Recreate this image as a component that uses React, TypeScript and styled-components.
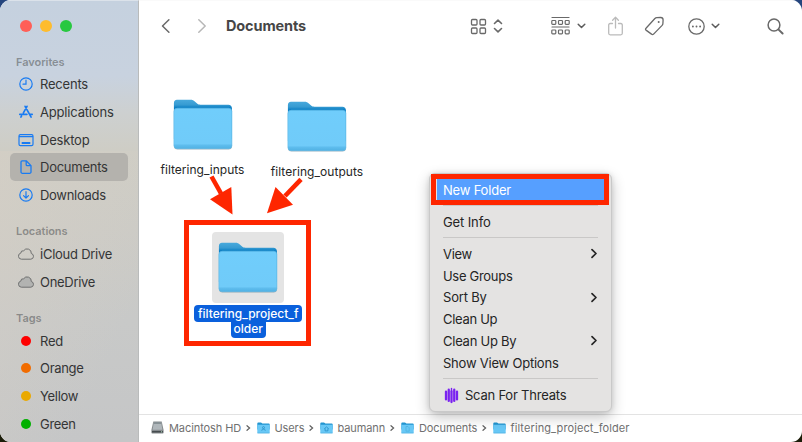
import React from "react";
import styled, { createGlobalStyle } from "styled-components";

const GlobalStyle = createGlobalStyle`
  * { box-sizing: border-box; }
  body {
    margin: 0;
    font-family: Inter, "Liberation Sans", sans-serif;
    -webkit-font-smoothing: antialiased;
  }
`;

const Desktop = styled.div`
  width: 802px;
  height: 442px;
  overflow: hidden;
  background: linear-gradient(180deg, #24457d 0%, #24457d 50%, #16150a 51%, #1b1c08 100%);
`;

const Window = styled.div`
  position: relative;
  display: flex;
  width: 802px;
  height: 442px;
  border-radius: 11px;
  overflow: hidden;
  background: #fff;
`;

const Sidebar = styled.aside`
  width: 139px;
  flex: none;
  display: flex;
  flex-direction: column;
  border-right: 1px solid #b9bbbb;
  border-top: 1px solid #dbe2ea;
  background:
    linear-gradient(115deg, rgba(213, 207, 197, 0.65) 0%, rgba(205, 203, 199, 0) 75%) 0 150px / 100% 292px no-repeat,
    linear-gradient(180deg, #c5d1df 0, #c8d2df 75px, #cdd0d0 112px, #cecdc5 150px, #cccbc6 230px, #c8c9c8 320px, #c5c6c7 442px);
`;

const Lights = styled.div`
  display: flex;
  gap: 8px;
  padding: 19px 0 0 20px;
  height: 53.5px;
`;

const Light = styled.span<{ $color: string }>`
  width: 12px;
  height: 12px;
  border-radius: 50%;
  background: ${(p) => p.$color};
`;

const Section = styled.section<{ $after?: number }>`
  margin-bottom: ${(p) => p.$after ?? 0}px;
`;

const SectionTitle = styled.h2`
  margin: 0 0 0 16px;
  height: 16px;
  line-height: 15px;
  font-size: 11px;
  font-weight: 600;
  letter-spacing: -0.05px;
  color: rgba(80, 82, 84, 0.55);
`;

const SideRow = styled.div<{ $active?: boolean }>`
  display: flex;
  align-items: center;
  height: 27.65px;
  margin: 0 10px;
  padding-left: 8px;
  border-radius: 5px;
  font-size: 13px;
  color: #343536;
  background: ${(p) => (p.$active ? "#b4b2ad" : "transparent")};
`;

const SideIcon = styled.span`
  width: 16px;
  height: 16px;
  flex: none;
  margin-right: 6px;
  display: flex;
  align-items: center;
  justify-content: center;
`;

const Tag = styled.span<{ $color: string }>`
  width: 10px;
  height: 10px;
  border-radius: 50%;
  background: ${(p) => p.$color};
`;

const Label = styled.span<{ $spacing?: number }>`
  white-space: nowrap;
  letter-spacing: ${(p) => p.$spacing ?? 0}px;
`;

const Main = styled.main`
  flex: 1;
  min-width: 0;
  display: flex;
  flex-direction: column;
  border-top: 1px solid #fafafa;
`;

const Toolbar = styled.header`
  display: flex;
  align-items: center;
  height: 50px;
  padding-left: 21px;
`;

const ToolSlot = styled.span<{ $w: number; $gap: number }>`
  display: flex;
  flex: none;
  width: ${(p) => p.$w}px;
  margin-right: ${(p) => p.$gap}px;
`;

const Title = styled.h1`
  margin: 0;
  width: 244px;
  font-size: 14.5px;
  font-weight: 700;
  letter-spacing: -0.13px;
  line-height: 20px;
  color: #464646;
`;

const Canvas = styled.div`
  flex: 1;
`;

const PathBar = styled.footer`
  display: flex;
  align-items: center;
  height: 28px;
  padding: 0 0 2px 12px;
  border-top: 1px solid #e3e3e3;
  font-size: 11px;
  color: #707070;
`;

const Crumb = styled.span<{ $w: number }>`
  display: flex;
  align-items: center;
  gap: 5px;
  width: ${(p) => p.$w}px;
  white-space: nowrap;
`;

const File = styled.div<{ $x: number; $y: number }>`
  position: absolute;
  left: ${(p) => p.$x}px;
  top: ${(p) => p.$y}px;
  width: 116px;
  display: flex;
  flex-direction: column;
  align-items: center;
`;

const Thumb = styled.div<{ $selected?: boolean }>`
  width: 72px;
  height: 71px;
  padding: 10px 0 0 6px;
  border-radius: 4px;
  background: ${(p) => (p.$selected ? "#e4e4e4" : "transparent")};
`;

const FileName = styled.div`
  margin-top: 2px;
  font-size: 12px;
  line-height: 16px;
  color: #262626;
`;

const SelectedName = styled.div`
  margin-top: 2px;
  display: flex;
  flex-direction: column;
  align-items: center;
  font-size: 12px;
  font-weight: 500;
  color: #fff;
`;

const NameLine = styled.span<{ $w: number; $last?: boolean }>`
  width: ${(p) => p.$w}px;
  height: ${(p) => (p.$last ? 16 : 17)}px;
  line-height: ${(p) => (p.$last ? 14 : 17)}px;
  text-align: center;
  white-space: nowrap;
  background: #0a60dc;
  border-radius: ${(p) => (p.$last ? "0 0 4px 4px" : "4px")};
`;

const Frame = styled.div<{ $x: number; $y: number; $w: number; $h: number }>`
  position: absolute;
  left: ${(p) => p.$x}px;
  top: ${(p) => p.$y}px;
  width: ${(p) => p.$w}px;
  height: ${(p) => p.$h}px;
  border: 5px solid #fe2600;
`;

const Arrows = styled.svg`
  position: absolute;
  left: 200px;
  top: 170px;
`;

const Menu = styled.div`
  position: absolute;
  left: 429px;
  top: 173px;
  width: 183px;
  height: 239px;
  padding: 5px 7px 0;
  border: 1px solid #c9c9c9;
  border-radius: 6px;
  background: #e4e3e2;
  box-shadow: 0 5px 14px rgba(0, 0, 0, 0.24), 0 0 5px rgba(0, 0, 0, 0.1);
`;

const MenuRow = styled.div<{ $active?: boolean }>`
  display: flex;
  align-items: center;
  height: 21.75px;
  padding: 0 6px;
  font-size: 13px;
  letter-spacing: -0.2px;
  color: ${(p) => (p.$active ? "#fff" : "#252525")};
  background: ${(p) => (p.$active ? "#569fff" : "transparent")};

  > svg:last-child {
    margin-left: auto;
  }
`;

const Separator = styled.div<{ $before: number; $after: number }>`
  height: 1px;
  margin: ${(p) => p.$before}px 6px ${(p) => p.$after}px;
  background: #c9c8c7;
`;

const BLUE = "#197bf2";

const Clock = () => (
  <svg width="16" height="16" viewBox="0 0 16 16" fill="none" stroke={BLUE} strokeWidth="1.2" strokeLinecap="round">
    <circle cx="8" cy="8" r="6.2" />
    <path d="M8 4.2V8.2H5" />
  </svg>
);
const AppIcon = () => (
  <svg width="16" height="16" viewBox="0 0 16 16" fill="none" stroke={BLUE} strokeWidth="1.7" strokeLinecap="round">
    <path d="M9 2.3 5.4 8.8M7.1 2.3l6 10.8M1.8 10.3h7.1M12 10.3h2.2M3.5 12l-.6 1.1" />
  </svg>
);
const DesktopIcon = () => (
  <svg width="16" height="16" viewBox="0 0 16 16" fill="none" stroke={BLUE} strokeWidth="1.2">
    <rect x="1" y="2.6" width="14" height="11" rx="1.4" />
    <path d="M1 4.6h14" />
    <path d="M3.7 11h8.6" strokeWidth="1.8" />
  </svg>
);
const DocIcon = () => (
  <svg width="16" height="16" viewBox="0 0 16 16" fill="none" stroke={BLUE} strokeWidth="1.3" strokeLinejoin="round">
    <path d="M4.2 1.8h4l4.8 4.8v6.3a1.4 1.4 0 0 1-1.4 1.4H4.4A1.4 1.4 0 0 1 3 12.9V3a1.2 1.2 0 0 1 1.2-1.2Z" />
    <path d="M8.2 2v3.7c0 .6.4 1 1 1h3.6" />
  </svg>
);
const DownIcon = () => (
  <svg width="16" height="16" viewBox="0 0 16 16" fill="none" stroke={BLUE} strokeWidth="1.2" strokeLinecap="round" strokeLinejoin="round">
    <circle cx="8" cy="8" r="6.2" />
    <path d="M8 4.7v6.3M5.5 8.7 8 11.2l2.5-2.5" />
  </svg>
);
const CloudIcon = ({ filled }: { filled?: boolean }) => (
  <svg width="16" height="16" viewBox="0 0 16 16" fill={filled ? "#b2b3b1" : "none"} stroke="#6f7070" strokeWidth="1">
    <path d="M3.4 13.2a3.1 3.1 0 0 1-.6-6.1 2.4 2.4 0 0 1 2.8-2.3 4.200 4.200 0 0 1 7.700 2.700 2.900 2.900 0 0 1-.5 5.700Z" />
  </svg>
);

const FolderIcon = () => (
  <svg width="61" height="53" viewBox="0 0 61 53">
    <defs>
      <linearGradient id="front" x1="0" y1="0" x2="0" y2="1">
        <stop offset="0" stopColor="#70cdfb" />
        <stop offset=".88" stopColor="#70cbf9" />
        <stop offset=".91" stopColor="#5fbdee" />
        <stop offset="1" stopColor="#50b1e3" />
      </linearGradient>
      <linearGradient id="back" x1="0" y1="0" x2="0" y2="1">
        <stop offset="0" stopColor="#48a9dc" />
        <stop offset=".13" stopColor="#369bd2" />
        <stop offset=".2" stopColor="#0d80c5" />
        <stop offset="1" stopColor="#248fcc" />
      </linearGradient>
    </defs>
    <rect x="1" y="8" width="58" height="42.5" rx="3.5" fill="#667985" opacity=".5" />
    <path d="M4 .8h13.5c2 0 3.1.6 4.3 1.7l2.6 2.3c.8.7 1.7.9 3 .9h28.1c2 0 3.4 1.3 3.4 3.4V40H.9V4.2C.9 2.100 2 .8 4 .8Z" fill="url(#back)" />
    <path d="M4.400 9.200h51.200a3.300 3.300 0 0 1 3.300 3v34.600a3 3 0 0 1-3 2.900H4a3.100 3.100 0 0 1-3.100-3.100V12.500a3.400 3.400 0 0 1 3.500-3.300Z" fill="url(#front)" stroke="#60b8e5" strokeWidth=".6" />
  </svg>
);

const ChevronDown = () => (
  <svg width="9" height="8" viewBox="0 0 9 8" fill="none" stroke="#5c5c5c" strokeWidth="1.5" strokeLinecap="round" strokeLinejoin="round">
    <path d="m1.200 2.200 3.300 3.300 3.300-3.300" />
  </svg>
);
const MenuChevron = () => (
  <svg width="8" height="11" viewBox="0 0 8 11" fill="none" stroke="#252525" strokeWidth="1.7" strokeLinecap="round" strokeLinejoin="round">
    <path d="m2 1.700 4 3.800-4 3.800" />
  </svg>
);
const CrumbChevron = () => (
  <svg width="5" height="8" viewBox="0 0 5 8" fill="none" stroke="#5f5f5f" strokeWidth="1.2" strokeLinecap="round">
    <path d="M1 1.700 3.600 4 1 6.300" />
  </svg>
);
const SmallFolder = ({ kind }: { kind?: "users" | "home" | "doc" }) => (
  <svg width="13" height="12" viewBox="0 0 13 12">
    <path d="M.3 1.500Q.3.500 1.300.500H4l1.400 1h6.300q1 0 1 1v5H.3Z" fill="#2295d0" />
    <rect x=".3" y="2.7" width="12.4" height="8.6" rx=".6" fill="#68c8f6" />
    <path d="M.5 11h12" stroke="#4aaddd" strokeWidth=".6" />
    {kind === "users" && <path d="M4.800 8.700c0-1.200.6-1.600 1.700-1.600s1.700.4 1.700 1.600M5.500 5.600a1 1 0 1 0 2 0 1 1 0 1 0-2 0" fill="none" stroke="#278fc6" strokeWidth=".8" />}
    {kind === "home" && <path d="m4.200 6.900 2.300-2 2.300 2M5.100 6.500v2.400h2.800V6.500" fill="none" stroke="#278fc6" strokeWidth=".8" />}
    {kind === "doc" && <path d="M5 4.500h2l1.200 1.300v3.400H5Z" fill="none" stroke="#46acd9" strokeWidth=".6" />}
  </svg>
);
const DiskIcon = () => (
  <svg width="13" height="13" viewBox="0 0 13 13">
    <path d="M2.300.5h8.400l1.900 8.600v2.400q0 1-1 1H1.400q-1 0-1-1V9Z" fill="#868b8e" />
    <path d="M2.900 1h7.200l1.300 7.800H1.600Z" fill="#b0b7bb" />
    <path d="M3.100 1.200h6.800l.3 1.500H2.800Z" fill="#7a8489" />
    <path d="M1 10h11v1.500H1Z" fill="#464c4f" />
    <path d="M10 10.800h1" stroke="#a9d5ba" />
  </svg>
);
const ThreatIcon = () => (
  <svg width="15" height="17" viewBox="0 0 15 17" fill="none" stroke="#7a22f0" strokeWidth="2.300" strokeLinecap="round">
    <path d="M2 4.600v7.800M4.750 2.700v11.200M7.500 4.300v10.700M10.250 2.700v11.200M13 4.600v7.800" />
    <path d="M7.500 1.500v3" strokeWidth="1.4" />
  </svg>
);

const favorites = [
  { name: "Recents", icon: <Clock />, spacing: -0.2 },
  { name: "Applications", icon: <AppIcon />, spacing: -0.18 },
  { name: "Desktop", icon: <DesktopIcon />, spacing: -0.2 },
  { name: "Documents", icon: <DocIcon />, spacing: -0.25, active: true },
  { name: "Downloads", icon: <DownIcon />, spacing: -0.3 },
];
const locations = [
  { name: "iCloud Drive", icon: <CloudIcon />, spacing: -0.25 },
  { name: "OneDrive", icon: <CloudIcon filled />, spacing: -0.3 },
];
const tags = [
  { name: "Red", icon: <Tag $color="#fe0000" />, spacing: -0.3 },
  { name: "Orange", icon: <Tag $color="#f16c00" />, spacing: -0.3 },
  { name: "Yellow", icon: <Tag $color="#eaa900" />, spacing: -0.3 },
  { name: "Green", icon: <Tag $color="#00b000" />, spacing: -0.3 },
];

type Entry = { name: string; icon: React.ReactNode; spacing: number; active?: boolean };

const SideSection = ({ title, items, after }: { title: string; items: Entry[]; after?: number }) => (
  <Section $after={after}>
    <SectionTitle>{title}</SectionTitle>
    {items.map((item) => (
      <SideRow key={item.name} $active={item.active}>
        <SideIcon>{item.icon}</SideIcon>
        <Label $spacing={item.spacing}>{item.name}</Label>
      </SideRow>
    ))}
  </Section>
);

const gray = { fill: "none", stroke: "#696969", strokeWidth: 1.3, strokeLinecap: "round", strokeLinejoin: "round" } as const;

const MainToolbar = () => (
  <Toolbar>
    <ToolSlot $w={12} $gap={24}>
      <svg width="12" height="16" viewBox="0 0 12 16" {...gray} strokeWidth={1.5}><path d="M8.900 1.700 2.500 8l6.400 6.300" /></svg>
    </ToolSlot>
    <ToolSlot $w={12} $gap={18}>
      <svg width="12" height="16" viewBox="0 0 12 16" {...gray} stroke="#b7b7b7" strokeWidth={1.5}><path d="M2.800 1.700 9.200 8l-6.400 6.300" /></svg>
    </ToolSlot>
    <Title>Documents</Title>
    <ToolSlot $w={17} $gap={6}>
      <svg width="17" height="17" viewBox="0 0 17 17" {...gray}>
        <rect x="1.5" y="1.5" width="5.5" height="5.5" rx="1" /><rect x="10" y="1.5" width="5.5" height="5.5" rx="1" />
        <rect x="1.5" y="10" width="5.5" height="5.5" rx="1" /><rect x="10" y="10" width="5.5" height="5.5" rx="1" />
      </svg>
    </ToolSlot>
    <ToolSlot $w={10} $gap={47}>
      <svg width="10" height="16" viewBox="0 0 10 16" {...gray} strokeWidth={1.6}><path d="M1.500 5.500 5 2.200l3.500 3.300M1.500 10.500 5 13.800l3.500-3.300" /></svg>
    </ToolSlot>
    <ToolSlot $w={21} $gap={6}>
      <svg width="21" height="20" viewBox="0 0 21 20" {...gray} strokeWidth={1.2}>
        <path d="M2 1.500h17M2 11h17" />
        <rect x="1.8" y="4.5" width="4" height="3.8" rx=".8" /><rect x="8.5" y="4.5" width="4" height="3.8" rx=".8" /><rect x="15.2" y="4.5" width="4" height="3.8" rx=".8" />
        <rect x="1.8" y="14" width="4" height="3.8" rx=".8" /><rect x="8.5" y="14" width="4" height="3.8" rx=".8" /><rect x="15.2" y="14" width="4" height="3.8" rx=".8" />
      </svg>
    </ToolSlot>
    <ToolSlot $w={9} $gap={21}><ChevronDown /></ToolSlot>
    <ToolSlot $w={17} $gap={20}>
      <svg width="17" height="20" viewBox="0 0 17 20" {...gray} stroke="#bbb">
        <path d="M5.500 7.500H3.200q-1.500 0-1.500 1.500v8.300q0 1.500 1.500 1.500h10.600q1.500 0 1.500-1.500V9q0-1.500-1.500-1.500h-2.300M8.500 12V1.500M5.600 4.200l2.900-2.900 2.900 2.900" />
      </svg>
    </ToolSlot>
    <ToolSlot $w={21} $gap={21.5}>
      <svg width="21" height="20" viewBox="0 0 21 20" {...gray}>
        <path d="m2 12.200 8.900-9.700q.8-.8 1.900-.9l3.900-.1q2.400 0 2.400 2.400l-.2 3.600q0 1-.8 1.900l-8.500 8.700q-1.100 1-2.100 0L2 14.100q-1-.9 0-1.900Z" />
        <circle cx="14.7" cy="6" r="1" fill="#696969" stroke="none" />
      </svg>
    </ToolSlot>
    <ToolSlot $w={19} $gap={5.5}>
      <svg width="19" height="19" viewBox="0 0 19 19" {...gray}>
        <circle cx="9.5" cy="9.5" r="7.7" />
        <path d="M5.900 9.500h.01M9.500 9.500h.01M13.100 9.500h.01" strokeWidth="1.9" />
      </svg>
    </ToolSlot>
    <ToolSlot $w={9} $gap={45.5}><ChevronDown /></ToolSlot>
    <ToolSlot $w={19} $gap={0}>
      <svg width="19" height="19" viewBox="0 0 19 19" {...gray} strokeWidth={1.5}>
        <circle cx="8" cy="8" r="5.9" /><path d="m12.600 12.600 4 3.900" strokeWidth="2" />
      </svg>
    </ToolSlot>
  </Toolbar>
);

const ContextMenu = () => (
  <Menu>
    <MenuRow $active><Label $spacing={-0.2}>New Folder</Label></MenuRow>
    <Separator $before={4} $after={5} />
    <MenuRow><Label $spacing={-0.12}>Get Info</Label></MenuRow>
    <Separator $before={4.5} $after={5} />
    <MenuRow><Label $spacing={-0.3}>View</Label><MenuChevron /></MenuRow>
    <MenuRow><Label $spacing={-0.3}>Use Groups</Label></MenuRow>
    <MenuRow><Label $spacing={-0.2}>Sort By</Label><MenuChevron /></MenuRow>
    <MenuRow><Label $spacing={-0.3}>Clean Up</Label></MenuRow>
    <MenuRow><Label $spacing={-0.25}>Clean Up By</Label><MenuChevron /></MenuRow>
    <MenuRow><Label $spacing={-0.22}>Show View Options</Label></MenuRow>
    <Separator $before={4.5} $after={5.5} />
    <MenuRow><SideIcon><ThreatIcon /></SideIcon><Label $spacing={-0.22}>Scan For Threats</Label></MenuRow>
  </Menu>
);

export default function App() {
  return (
    <Desktop>
      <GlobalStyle />
      <Window>
        <Sidebar>
          <Lights>
            <Light $color="#ff5f57" />
            <Light $color="#febc2e" />
            <Light $color="#28c840" />
          </Lights>
          <SideSection title="Favorites" items={favorites} after={15.5} />
          <SideSection title="Locations" items={locations} after={15.5} />
          <SideSection title="Tags" items={tags} />
        </Sidebar>
        <Main>
          <MainToolbar />
          <Canvas>
            <File $x={144.5} $y={88.5}>
              <Thumb><FolderIcon /></Thumb>
              <FileName><Label>filtering_inputs</Label></FileName>
            </File>
            <File $x={259} $y={90.5}>
              <Thumb><FolderIcon /></Thumb>
              <FileName><Label $spacing={0.05}>filtering_outputs</Label></FileName>
            </File>
            <File $x={190.2} $y={231.5}>
              <Thumb $selected><FolderIcon /></Thumb>
              <SelectedName>
                <NameLine $w={108}>filtering_project_f</NameLine>
                <NameLine $w={35} $last>older</NameLine>
              </SelectedName>
            </File>
          </Canvas>
          <PathBar>
            <Crumb $w={105.5}><DiskIcon /><Label $spacing={-0.08}>Macintosh HD</Label><CrumbChevron /></Crumb>
            <Crumb $w={63}><SmallFolder kind="users" /><Label $spacing={-0.1}>Users</Label><CrumbChevron /></Crumb>
            <Crumb $w={81.5}><SmallFolder kind="home" /><Label $spacing={-0.1}>baumann</Label><CrumbChevron /></Crumb>
            <Crumb $w={91.5}><SmallFolder kind="doc" /><Label $spacing={-0.1}>Documents</Label><CrumbChevron /></Crumb>
            <Crumb $w={140}><SmallFolder /><Label $spacing={0.1}>filtering_project_folder</Label></Crumb>
          </PathBar>
        </Main>
        <Frame $x={184} $y={220} $w={127} $h={126} />
        <Arrows width="110" height="50" viewBox="200 170 110 50" fill="#fe2600">
          <path d="m211.500 176.500 9.500 17" stroke="#fe2600" strokeWidth="4.6" />
          <path d="m210 199.300 21.300-12.200 1.200 27.400Z" />
          <path d="M301 179.300 285 196" stroke="#fe2600" strokeWidth="4.6" />
          <path d="m275.500 187 17.500 17.700-26 8.500Z" />
        </Arrows>
        <ContextMenu />
        <Frame $x={431} $y={174} $w={178} $h={31} />
      </Window>
    </Desktop>
  );
}
